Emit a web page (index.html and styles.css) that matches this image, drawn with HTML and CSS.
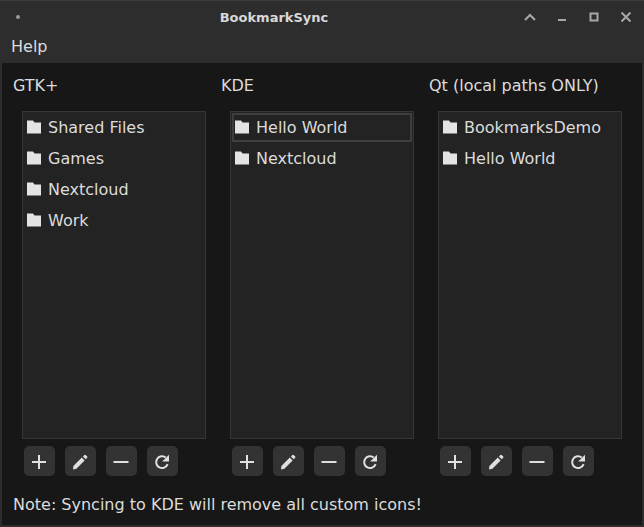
FILE: index.html
```html
<!DOCTYPE html>
<html lang="en">
<head>
  <meta charset="UTF-8">
  <title>BookmarkSync</title>
  <link rel="stylesheet" href="styles.css">
</head>
<body>
  <svg width="0" height="0" class="defs">
    <symbol id="folder" viewBox="0 0 14 14">
      <path d="M0 .5 H6 L7.5 2.5 H14 V13.5 H0 Z" fill="#e4e4e4"/>
    </symbol>
    <symbol id="plus" viewBox="0 0 16 16">
      <path d="M8 1V15M1 8H15" stroke="#e0e0e0" stroke-width="2" fill="none"/>
    </symbol>
    <symbol id="pencil" viewBox="0 0 16 16">
      <path d="M1 15.6 L1.4 12 L9.8 3.6 L12.6 6.4 L4.4 14.8 Z M10.9 2.5 L12.4 1 Q13 .5 13.6 1 L15.2 2.6 Q15.7 3.2 15.2 3.8 L13.7 5.3 Z" fill="#e0e0e0"/>
    </symbol>
    <symbol id="minus" viewBox="0 0 16 16">
      <path d="M.5 8H15.5" stroke="#e0e0e0" stroke-width="2" fill="none"/>
    </symbol>
    <symbol id="reload" viewBox="0 0 16 16">
      <path d="M13.6 10.2 A5.9 5.9 0 1 1 11.8 3.6" stroke="#e0e0e0" stroke-width="2" fill="none"/>
      <path d="M15 .8 V7.6 H8.2 Z" fill="#e0e0e0"/>
    </symbol>
  </svg>

  <div class="window">
    <div class="titlebar">
      <span class="dot"></span>
      <span class="title">BookmarkSync</span>
      <div class="controls">
        <svg class="ctl" viewBox="0 0 12 8"><path d="M1 7 L6 2 L11 7" stroke="#a8a8a8" stroke-width="2" fill="none"/></svg>
        <svg class="ctl" viewBox="0 0 12 8"><path d="M2 7H10" stroke="#a8a8a8" stroke-width="2" fill="none"/></svg>
        <svg class="ctl" viewBox="0 0 12 8"><rect x="2.5" y=".5" width="7" height="7" stroke="#a8a8a8" stroke-width="2" fill="none"/></svg>
        <svg class="ctl" viewBox="0 0 12 10"><path d="M1.5 .5 L10.5 9.5 M10.5 .5 L1.5 9.5" stroke="#a8a8a8" stroke-width="2" fill="none"/></svg>
      </div>
    </div>
    <div class="menubar"><span>Help</span></div>

    <div class="content">
      <div class="columns">
        <section class="column">
          <h2>GTK+</h2>
          <ul class="list">
            <li><svg class="folder"><use href="#folder"/></svg>Shared Files</li>
            <li><svg class="folder"><use href="#folder"/></svg>Games</li>
            <li><svg class="folder"><use href="#folder"/></svg>Nextcloud</li>
            <li><svg class="folder"><use href="#folder"/></svg>Work</li>
          </ul>
          <div class="buttons">
            <button><svg><use href="#plus"/></svg></button>
            <button><svg><use href="#pencil"/></svg></button>
            <button><svg><use href="#minus"/></svg></button>
            <button><svg><use href="#reload"/></svg></button>
          </div>
        </section>
        <section class="column">
          <h2>KDE</h2>
          <ul class="list">
            <li class="current"><svg class="folder"><use href="#folder"/></svg>Hello World</li>
            <li><svg class="folder"><use href="#folder"/></svg>Nextcloud</li>
          </ul>
          <div class="buttons">
            <button><svg><use href="#plus"/></svg></button>
            <button><svg><use href="#pencil"/></svg></button>
            <button><svg><use href="#minus"/></svg></button>
            <button><svg><use href="#reload"/></svg></button>
          </div>
        </section>
        <section class="column">
          <h2>Qt (local paths ONLY)</h2>
          <ul class="list">
            <li><svg class="folder"><use href="#folder"/></svg>BookmarksDemo</li>
            <li><svg class="folder"><use href="#folder"/></svg>Hello World</li>
          </ul>
          <div class="buttons">
            <button><svg><use href="#plus"/></svg></button>
            <button><svg><use href="#pencil"/></svg></button>
            <button><svg><use href="#minus"/></svg></button>
            <button><svg><use href="#reload"/></svg></button>
          </div>
        </section>
      </div>
      <p class="note">Note: Syncing to KDE will remove all custom icons!</p>
    </div>
  </div>
</body>
</html>
```

FILE: styles.css
```css
html, body {
  margin: 0;
  height: 100%;
}
body {
  font-family: "DejaVu Sans", sans-serif;
  font-size: 16px;
  color: #dcdcdc;
  background-color: #2d2d2d;
  overflow: hidden;
}
.defs {
  position: absolute;
}
.window {
  display: flex;
  flex-direction: column;
  height: 527px;
  box-sizing: border-box;
  padding: 1px 2px 2px;
  border-top: 1px solid #3c3c3c;
  background-color: #2d2d2d;
}
.titlebar {
  display: flex;
  align-items: center;
  height: 30px;
  flex-shrink: 0;
  position: relative;
}
.dot {
  width: 4px;
  height: 4px;
  margin-left: 14px;
  border-radius: 50%;
  background-color: #9a9a9a;
}
.title {
  position: absolute;
  left: 0;
  right: 96px;
  text-align: center;
  font-size: 13px;
  font-weight: bold;
  color: #d8d8d8;
}
.controls {
  margin-left: auto;
  display: flex;
  align-items: center;
  gap: 20px;
  padding-right: 10px;
}
.ctl {
  width: 12px;
  height: 10px;
}
.menubar {
  height: 31px;
  flex-shrink: 0;
  padding-left: 9px;
  line-height: 30px;
}
.content {
  flex: 1;
  background-color: #171717;
  padding-left: 11px;
}
.columns {
  display: flex;
  gap: 24px;
}
.column {
  width: 184px;
}
.column h2 {
  margin: 0;
  height: 48px;
  line-height: 46px;
  font-size: 16px;
  font-weight: normal;
  white-space: nowrap;
}
.list {
  list-style: none;
  margin: 0 0 7px 9px;
  padding: 1px;
  width: 184px;
  height: 328px;
  box-sizing: border-box;
  background-color: #232323;
  border: 1px solid #363636;
}
.list li {
  display: flex;
  align-items: center;
  height: 29px;
  margin-bottom: 2px;
  box-sizing: border-box;
  padding-left: 3px;
}
.list li.current {
  border: 2px solid #3e3e3e;
  padding-left: 1px;
}
.folder {
  width: 14px;
  height: 14px;
  margin-right: 7px;
  margin-top: -2px;
}
.buttons {
  display: flex;
  gap: 10px;
  margin-left: 11px;
}
.buttons button {
  display: flex;
  align-items: center;
  justify-content: center;
  width: 31px;
  height: 30px;
  padding: 2px 1px 0 0;
  border: none;
  border-radius: 5px;
  background-color: #333333;
}
.buttons svg {
  width: 16px;
  height: 16px;
}
.note {
  margin: 19px 0 0;
}
```
